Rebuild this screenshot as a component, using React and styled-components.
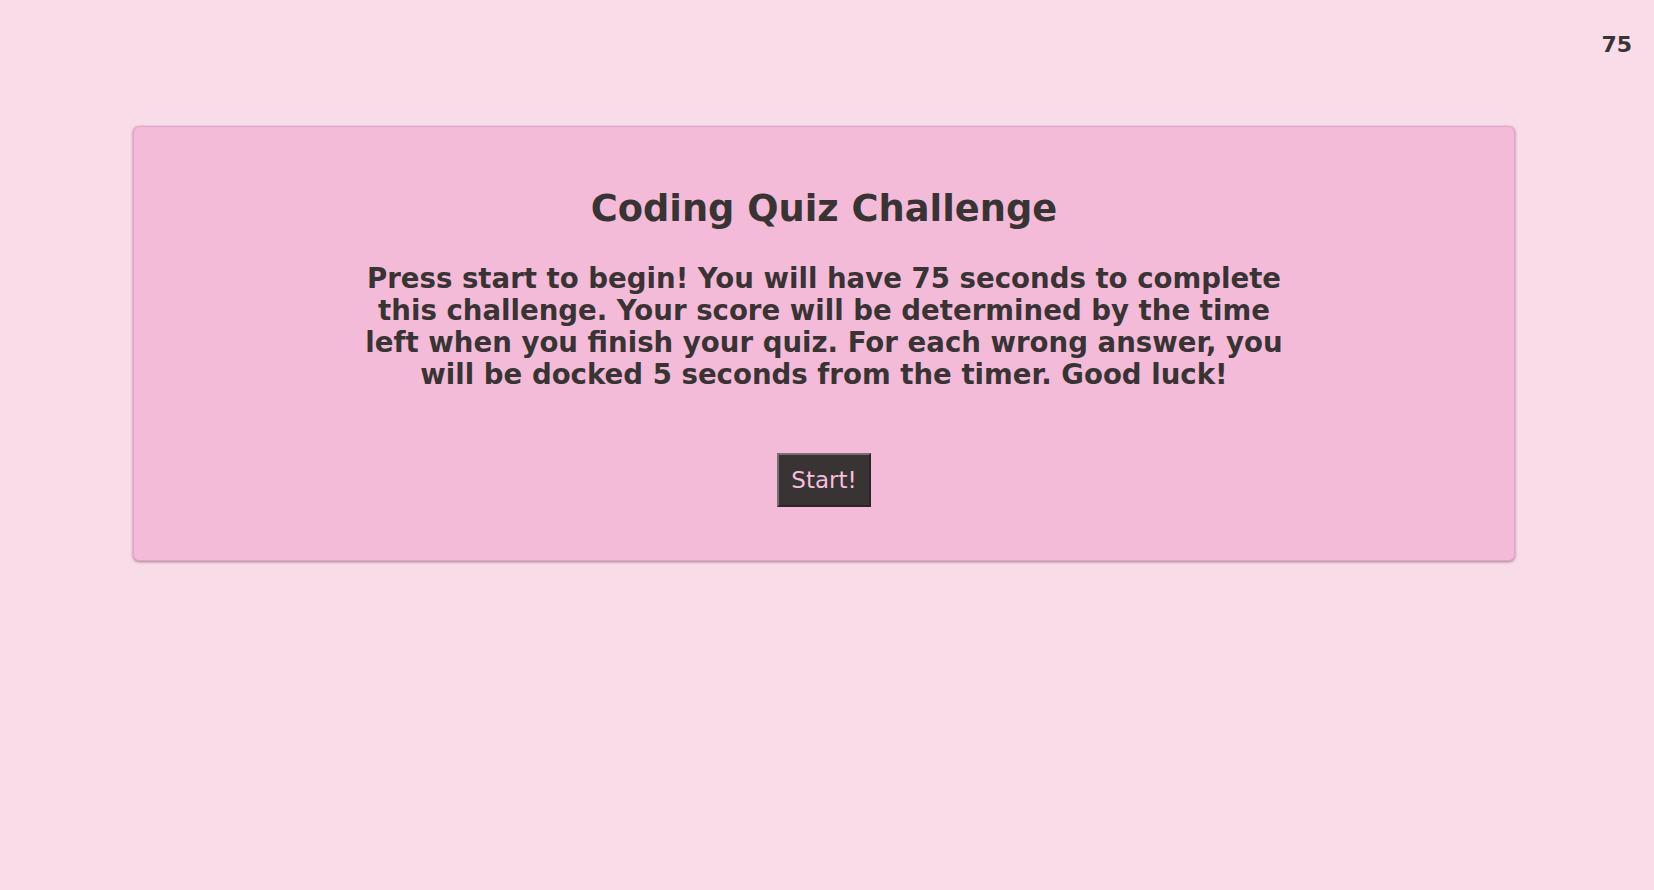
import React from 'react';
import styled, { createGlobalStyle } from 'styled-components';

const GlobalStyle = createGlobalStyle`
  html, body {
    margin: 0;
    padding: 0;
    background: #f8dde9;
  }

  body {
    font-family: Verdana, "DejaVu Sans", sans-serif;
    color: #383434;
  }
`;

const Page = styled.div`
  min-height: 890px;
  display: flex;
  flex-direction: column;
`;

const TopBar = styled.header`
  display: flex;
  justify-content: flex-end;
  height: 126px;
  padding: 0 22px;
  box-sizing: border-box;
`;

const Timer = styled.div`
  font-size: 22px;
  font-weight: bold;
  margin-top: 32px;
  line-height: 26px;
`;

const Card = styled.main`
  width: 1382px;
  margin: 0 0 0 133px;
  box-sizing: border-box;
  background: #f3bbd8;
  border: 1px solid #e8a2c8;
  border-radius: 6px;
  box-shadow: 0 1px 3px rgba(60, 40, 50, 0.5);
  padding: 60px 0 53px;
  display: flex;
  flex-direction: column;
  align-items: center;
  text-align: center;
`;

const Title = styled.h1`
  margin: 0;
  font-size: 36.8px;
  line-height: 44px;
  font-weight: bold;
`;

const Intro = styled.p`
  max-width: 940px;
  margin: 32px 0 0;
  font-size: 27.6px;
  line-height: 32px;
  font-weight: bold;
`;

const StartButton = styled.button`
  margin-top: 62px;
  width: 94px;
  height: 54px;
  background: #383434;
  color: #f6bedc;
  font-family: Verdana, "DejaVu Sans", sans-serif;
  font-size: 23px;
  border: 2px solid;
  border-color: #757073 #2a2627 #2a2627 #757073;
  cursor: pointer;
  padding: 0;
`;

const App = () => {
  return (
    <Page>
      <GlobalStyle />
      <TopBar>
        <Timer>75</Timer>
      </TopBar>
      <Card>
        <Title>Coding Quiz Challenge</Title>
        <Intro>
          Press start to begin! You will have 75 seconds to complete this challenge. Your score will be
          determined by the time left when you finish your quiz. For each wrong answer, you will be docked
          5 seconds from the timer. Good luck!
        </Intro>
        <StartButton>Start!</StartButton>
      </Card>
    </Page>
  );
};

export default App;
